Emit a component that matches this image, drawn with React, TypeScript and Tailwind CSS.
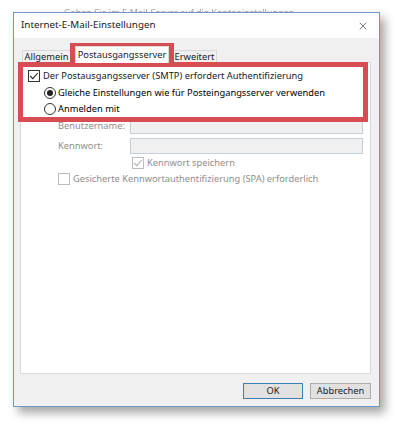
import { X } from 'lucide-react';

function CheckBox({ checked, disabled }: { checked?: boolean; disabled?: boolean }) {
  return (
    <span
      className={`flex h-[12px] w-[12px] shrink-0 items-center justify-center border bg-white ${
        disabled ? 'border-[#bcbcbc]' : 'border-[#333]'
      }`}
    >
      {checked && (
        <svg width="10" height="10" viewBox="0 0 10 10" fill="none">
          <path
            d="M1.2 5 L3.8 7.6 L8.8 2"
            stroke={disabled ? '#b0b0b0' : '#222'}
            strokeWidth="1.1"
          />
        </svg>
      )}
    </span>
  );
}

function Radio({ checked }: { checked?: boolean }) {
  return (
    <span className="flex h-[12px] w-[12px] shrink-0 items-center justify-center rounded-full border border-[#333] bg-white">
      {checked && <span className="h-[6px] w-[6px] rounded-full bg-[#222]" />}
    </span>
  );
}

export default function App() {
  return (
    <div className="relative h-[426px] w-[397px] overflow-hidden bg-white font-['Noto_Sans',sans-serif] text-[9.3px] text-[#1a1a1a]">
      <div className="h-[12px] overflow-hidden pl-[64px] pt-[8px] text-[9px] leading-none text-[#a0a0a0] blur-[0.4px]">
        Gehen Sie im E-Mail-Server auf die Kontoeinstellungen
      </div>

      <div className="ml-[13px] flex h-[395px] w-[367px] flex-col border border-[#6f98c6] bg-[#f0f0f0] shadow-[5px_6px_9px_rgba(0,0,0,0.35)]">
        <div className="flex h-[25px] items-center justify-between bg-white pl-[7px] pr-[10px]">
          <span className="text-[9.8px]">Internet-E-Mail-Einstellungen</span>
          <X className="h-[12px] w-[12px] text-[#222]" strokeWidth={1.2} />
        </div>

        <div className="flex items-end pl-[8px] pt-[8px]">
          <div className="flex h-[12px] w-[49px] items-center justify-center border border-b-0 border-[#d9d9d9] bg-[#f0f0f0]">
            Allgemein
          </div>
          <div className="relative z-10 -mb-px ml-[4px] flex h-[17px] w-[94px] items-center justify-center border border-b-0 border-[#d9d9d9] bg-white">
            Postausgangsserver
          </div>
          <div className="ml-[3px] flex h-[12px] w-[45px] items-center justify-center border border-b-0 border-[#d9d9d9] bg-[#f0f0f0]">
            Erweitert
          </div>
        </div>

        <div className="ml-[6px] mr-[8px] flex h-[312px] flex-col border border-[#d9d9d9] bg-white pl-[7px]">
          <div className="mt-[5px] flex h-4 items-center gap-[3px]">
            <CheckBox checked />
            <span>Der Postausgangsserver (SMTP) erfordert Authentifizierung</span>
          </div>
          <div className="ml-[16px] mt-[1px] flex h-4 items-center gap-[2px] text-black">
            <Radio checked />
            <span>Gleiche Einstellungen wie für Posteingangsserver verwenden</span>
          </div>
          <div className="ml-[16px] flex h-4 items-center gap-[2px] text-black">
            <Radio />
            <span>Anmelden mit</span>
          </div>
          <div className="ml-[30px] mt-[1px] flex h-4 items-center text-[#8e8e8e]">
            <span className="w-[72px]">Benutzername:</span>
            <span className="h-4 w-[233px] border border-[#c5cfdb] bg-[#f0f0f0]" />
          </div>
          <div className="ml-[30px] mt-[4px] flex h-4 items-center text-[#8e8e8e]">
            <span className="w-[72px]">Kennwort:</span>
            <span className="h-4 w-[233px] border border-[#c5cfdb] bg-[#f0f0f0]" />
          </div>
          <div className="ml-[104px] mt-[1px] flex h-4 items-center gap-[3px] text-[#8e8e8e]">
            <CheckBox checked disabled />
            <span>Kennwort speichern</span>
          </div>
          <div className="ml-[30px] flex h-4 items-center gap-[3px] text-[#8e8e8e]">
            <CheckBox disabled />
            <span>Gesicherte Kennwortauthentifizierung (SPA) erforderlich</span>
          </div>
        </div>

        <div className="mr-[8px] mt-[9px] flex justify-end gap-[7px]">
          <button className="flex h-[16px] w-[60px] items-center justify-center border border-[#3c7fb1] bg-[#e1e1e1]">
            OK
          </button>
          <button className="flex h-[16px] w-[61px] items-center justify-center border border-[#adadad] bg-[#e1e1e1]">
            Abbrechen
          </button>
        </div>
      </div>

      {/* annotation boxes */}
      <div className="absolute left-[70px] top-[43px] h-[21px] w-[104px] border-[5px] border-b-0 border-[#d64d55]" />
      <div className="absolute left-[18px] top-[62px] h-[60px] w-[350px] border-[5px] border-[#d64d55]" />
    </div>
  );
}
